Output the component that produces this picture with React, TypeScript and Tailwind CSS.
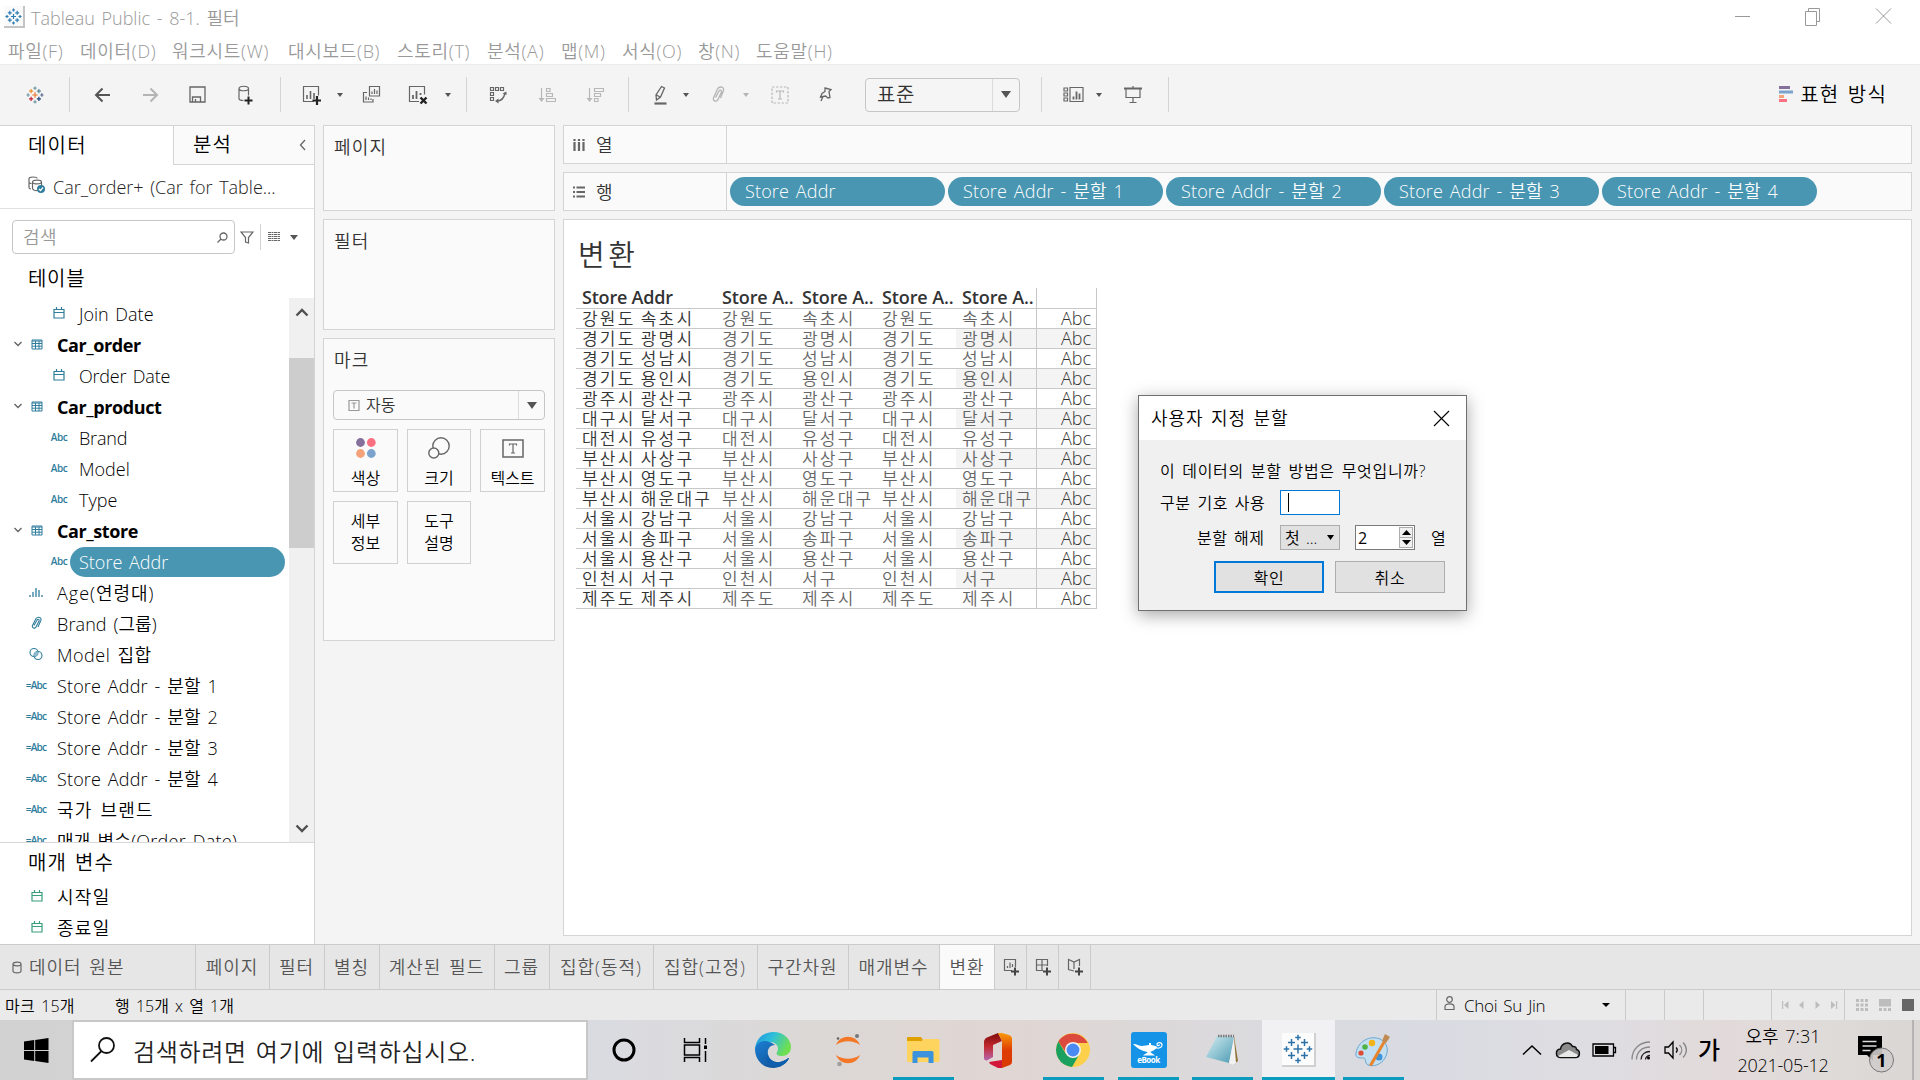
import type { ReactNode } from "react";

const addresses: [string, string][] = [
  ["강원도", "속초시"], ["경기도", "광명시"], ["경기도", "성남시"], ["경기도", "용인시"], ["광주시", "광산구"],
  ["대구시", "달서구"], ["대전시", "유성구"], ["부산시", "사상구"], ["부산시", "영도구"], ["부산시", "해운대구"],
  ["서울시", "강남구"], ["서울시", "송파구"], ["서울시", "용산구"], ["인천시", "서구"], ["제주도", "제주시"],
];

const plusArms: [number, number, number, number][] = [
  [12, 12, 3.6, 0], [12, 2.8, 2.2, 1], [12, 21.2, 2.2, 1], [2.8, 12, 2.2, 2], [21.2, 12, 2.2, 3],
  [6.8, 6.8, 2.8, 4], [17.2, 6.8, 2.8, 5], [6.8, 17.2, 2.8, 6], [17.2, 17.2, 2.8, 7],
];

function TableauMark({ size, colors, stroke = 1.5 }: { size: number; colors: string[]; stroke?: number }) {
  return (
    <svg width={size} height={size} viewBox="0 0 24 24" fill="none" strokeWidth={stroke}>
      {plusArms.map(([x, y, r, c], i) => (
        <path key={i} d={`M${x - r} ${y}H${x + r}M${x} ${y - r}V${y + r}`} stroke={colors[c % colors.length]} />
      ))}
    </svg>
  );
}

function Svg({ w, h, color = "#666", sw = 1.2, className = "", children }: { w: number; h: number; color?: string; sw?: number; className?: string; children: ReactNode }) {
  return (
    <svg width={w} height={h} viewBox={`0 0 ${w} ${h}`} fill="none" stroke={color} strokeWidth={sw} className={`shrink-0 ${className}`}>
      {children}
    </svg>
  );
}

function Caret({ w = 6, h = 4, color = "#555", className = "" }: { w?: number; h?: number; color?: string; className?: string }) {
  return (
    <svg width={w} height={h} viewBox="0 0 10 6" preserveAspectRatio="none" className={`shrink-0 ${className}`}>
      <path d="M0 0H10L5 6Z" fill={color} />
    </svg>
  );
}

const Divider = ({ className }: { className: string }) => <div className={`h-[35px] w-px shrink-0 bg-[#d4d4d4] ${className}`} />;

function TitleBar() {
  return (
    <div className="flex h-[34px] items-center bg-white">
      <div className="ml-1 flex h-[22px] w-[21px] items-center justify-center border-r-2 border-b-2 border-[#c4c4c4] bg-[#fafafa]">
        <TableauMark size={17} colors={["#2f7db5"]} stroke={1.7} />
      </div>
      <span className="mt-[2px] ml-[6px] text-[18px] text-[#999]">Tableau Public - 8-1. 필터</span>
      <Svg w={180} h={24} color="#999" sw={1} className="mr-[22px] mb-[2px] ml-auto">
        <path d="M17 12.500H32" />
        <path d="M87.500 7.500h11v14h-11zM90.500 7.500v-3h11v13h-3" />
        <path d="M158 4.500l15 15M173 4.500l-15 15" />
      </Svg>
    </div>
  );
}

const menus: [string, string][] = [
  ["파일(F)", "w-[72px]"], ["데이터(D)", "w-[92px]"], ["워크시트(W)", "w-[116px]"], ["대시보드(B)", "w-[109px]"], ["스토리(T)", "w-[90px]"],
  ["분석(A)", "w-[74px]"], ["맵(M)", "w-[61px]"], ["서식(O)", "w-[76px]"], ["창(N)", "w-[58px]"], ["도움말(H)", "w-[90px]"],
];

function MenuBar() {
  return (
    <div className="flex h-[30px] items-center bg-white pt-[3px] pl-2">
      {menus.map(([m, w]) => (
        <span key={m} className={`shrink-0 text-[18px] tracking-[0.700px] text-[#999] ${w}`}>{m}</span>
      ))}
    </div>
  );
}

function Toolbar() {
  return (
    <div className="flex h-[61px] items-center border-t border-[#ececec] bg-[#f4f4f4] pb-px">
      <div className="ml-[26px]">
        <TableauMark size={18} stroke={1.6} colors={["#e8762c", "#7099a5", "#7099a5", "#5b6591", "#eb912c", "#59879b", "#c72037", "#1f457e"]} />
      </div>
      <Divider className="ml-[25px]" />
      <Svg w={17} h={16} color="#555" sw={2} className="ml-[24px]"><path d="M16 8H2M8.500 1.500L2 8l6.500 6.500" /></Svg>
      <Svg w={17} h={16} color="#b4b4b4" sw={2} className="ml-[31px]"><path d="M1 8H15M8.500 1.500L15 8l-6.500 6.500" /></Svg>
      <Svg w={17} h={17} sw={1.300} className="ml-[30px]"><path d="M1 1h15v15h-15zM3.500 16v-5h8v5M6.500 16v-3" /></Svg>
      <Svg w={16} h={20} sw={1.200} className="ml-[32px]">
        <path d="M1 3.500v10c0 1.500 2 2 4.500 2M10.500 3.500v7M1 3.500c0-3 9.500-3 9.500 0s-9.500 3-9.500 0" />
        <path d="M10.500 11.500v8M6.500 15.500h8" stroke="#222" strokeWidth={2} />
      </Svg>
      <Divider className="ml-[26px]" />
      <Svg w={19} h={20} className="ml-[21px]">
        <path d="M12 16.500H1.500v-15h15v9" /><path d="M5 14v-4M8.500 14V6M12 14V8" strokeWidth={1.600} />
        <path d="M15 11v9M10.500 15.500h9" stroke="#222" strokeWidth={2.200} />
      </Svg>
      <Caret className="ml-[16px]" />
      <Svg w={19} h={19} className="ml-[19px]">
        <path d="M7.500 1.500h10v9.500h-10zM10 9V6.500M12.500 9V4M15 9V5.500" /><path d="M5 7.500H1.500v9.500h9.500v-3M4 15v-3.500M6.500 15v-2.500M9 15v-1.500" />
      </Svg>
      <Svg w={20} h={20} className="ml-[27px]">
        <path d="M11 16.500H1.500v-15h15v8" /><path d="M5 14v-4M8.500 14V6M12.500 10V8" strokeWidth={1.800} />
        <path d="M12.500 12.500l6 6M18.500 12.500l-6 6" stroke="#222" strokeWidth={2.400} />
      </Svg>
      <Caret className="ml-[17px]" />
      <Divider className="ml-[15px]" />
      <Svg w={20} h={19} className="ml-[22px]">
        <path d="M1.500 2.500h3v3h-3zM6.500 2.500h3v3h-3zM11.500 2.500h3v3h-3zM1.500 7.500h3v3h-3zM1.500 12.500h3v3h-3z" />
        <path d="M8 16c5 0 7-3 8-8" strokeWidth={1.400} /><path d="M17.500 6.500v3.500l-4-1.500zM6 16l3.500-2.500v5z" fill="#666" stroke="none" />
      </Svg>
      <Svg w={18} h={17} color="#b8b8b8" className="ml-[29px]"><path d="M3.500 2v11M8.500 2.500h3.500v3h-3.500zM8.500 7.500h6v3h-6zM8.500 12.500h9v3h-9z" /><path d="M.5 12h6l-3 4z" fill="#b8b8b8" stroke="none" /></Svg>
      <Svg w={18} h={17} color="#b8b8b8" className="ml-[30px]"><path d="M3.500 2v11M8.500 2.500h9v3h-9zM8.500 7.500h6v3h-6zM8.500 12.500h3.500v3h-3.500z" /><path d="M.5 12h6l-3 4z" fill="#b8b8b8" stroke="none" /></Svg>
      <Divider className="ml-[24px]" />
      <Svg w={15} h={20} sw={1.300} className="ml-[24px]">
        <path d="M8.500 1.500l3 1.500-4 9-4 3-.5-5zM3.500 10l3.500 2" /><path d="M1.500 18.500h12" strokeWidth={2.200} />
      </Svg>
      <Caret className="ml-[15px]" />
      <Svg w={15} h={20} color="#b4b4b4" sw={1.300} className="ml-[22px]">
        <path d="M4.500 12.500l3.500-6.500c1-1.500 3-.5 2.500 1L7 14.500c-1 2.500-5.500 2-4.500-1.500L6.500 4c2-3.500 7-2 6 1.500L9.500 13" />
      </Svg>
      <Caret className="ml-[17px]" color="#b4b4b4" />
      <Svg w={18} h={18} color="#b8b8b8" className="ml-[22px]">
        <path d="M1 1h16v16H1z" strokeDasharray="2.500 1.500" /><path d="M5.500 6.500V5h7v1.500M9 5v8M7 13h4" />
      </Svg>
      <Svg w={16} h={19} sw={1.300} className="ml-[29px]">
        <path d="M7 3l6 1.500-2 2 1 6-2 .5-2.500-2L2.500 12 4 8.500l3-2zM5 11.500L3 16" />
      </Svg>
      <div className="ml-[31px] flex h-[34px] w-[155px] items-center rounded-sm border border-[#c6c6c6] bg-[#f5f5f5]">
        <span className="flex-1 pl-[11px] text-[20px] tracking-[0.500px] text-[#333]">표준</span>
        <div className="flex h-full w-[27px] items-center justify-center border-l border-[#dcdcdc]"><Caret w={10} h={7} /></div>
      </div>
      <Divider className="ml-[21px]" />
      <Svg w={21} h={17} className="ml-[21px]">
        <path d="M1 2h3.500v3H1zM1 7h3.500v3H1zM1 12h3.500v3H1zM7 1.500h13v14H7z" /><path d="M10.500 13.500v-3M13.500 13.500v-8M16.500 13.500v-6" strokeWidth={1.800} />
      </Svg>
      <Caret className="ml-[12px]" />
      <Svg w={18} h={18} className="ml-[22px]">
        <path d="M0 2.500h18" strokeWidth={2} /><path d="M2 3v8.500h14V3M9 11.500V16M9 0v2M5.500 16.500h7" />
      </Svg>
      <Divider className="ml-[26px]" />
      <svg width="14" height="17" viewBox="0 0 14 17" className="ml-auto">
        <path d="M0 0h11v3H0z" fill="#85709b" /><path d="M0 4.500h14v3H0z" fill="#7ba3cd" />
        <path d="M0 9h5v3H0z" fill="#f4a27a" /><path d="M0 13h8v3H0z" fill="#fa7080" />
      </svg>
      <span className="mr-[33px] ml-[7px] text-[20px] tracking-[1.200px] text-black">표현 방식</span>
    </div>
  );
}

const Cal = ({ color = "#2f7d9c" }: { color?: string }) => (
  <Svg w={12} h={12} color={color}><path d="M1 2.500h10v8.500h-10zM1 5.500h10M3.500 0v3M8.500 0v3" /></Svg>
);
const Sheet = () => (
  <Svg w={12} h={11} color="#2f7d9c" sw={1}><path d="M1 1h10v9h-10zM1 2h10M1 4.500h10M1 7.200h10M4.500 2v8M8 2v8" /></Svg>
);
const Abc = () => <span className="text-[10px] font-semibold tracking-[-0.400px] text-[#2f7d9c]">Abc</span>;
const CalcAbc = () => <span className="text-[10px] font-semibold tracking-[-0.700px] text-[#2f7d9c]">=Abc</span>;

type Row = { label: string; kind: "sub" | "table" | "field"; icon: ReactNode; selected?: boolean; tracking?: string };
const rows: Row[] = [
  { label: "Join Date", kind: "sub", icon: <Cal /> },
  { label: "Car_order", kind: "table", icon: <Sheet /> },
  { label: "Order Date", kind: "sub", icon: <Cal />, tracking: "tracking-[-0.200px]" },
  { label: "Car_product", kind: "table", icon: <Sheet /> },
  { label: "Brand", kind: "sub", icon: <Abc />, tracking: "tracking-[-0.200px]" },
  { label: "Model", kind: "sub", icon: <Abc /> },
  { label: "Type", kind: "sub", icon: <Abc /> },
  { label: "Car_store", kind: "table", icon: <Sheet /> },
  { label: "Store Addr", kind: "sub", icon: <Abc />, selected: true },
  { label: "Age(연령대)", kind: "field", tracking: "tracking-[1px]", icon: <Svg w={14} h={10} color="#2f7d9c" sw={1.300}><path d="M1 10V8M4 10V5M7 10V1M10 10V3M13 10V8" /></Svg> },
  { label: "Brand (그룹)", kind: "field", tracking: "tracking-[0.100px]", icon: <Svg w={12} h={14} color="#2f7d9c" sw={1.100}><path d="M4 9.500l3-5.500c1-1.200 2.500-.2 2 1L6 11c-1 2-4.500 1-3.500-1.500l3.500-7c2-2.500 6-1 4.800 2L8 11" /></Svg> },
  { label: "Model 집합", kind: "field", tracking: "tracking-[0.500px]", icon: <Svg w={14} h={14} color="#2f7d9c" sw={1.100}><circle cx="5" cy="5.500" r="4" /><circle cx="9" cy="8.500" r="4" /><path d="M5 8.500a4 4 0 0 1 4-4v1a4 4 0 0 1-4 4z" fill="#8fbccc" stroke="none" /></Svg> },
  { label: "Store Addr - 분할 1", kind: "field", icon: <CalcAbc />, tracking: "tracking-[0.150px]" },
  { label: "Store Addr - 분할 2", kind: "field", icon: <CalcAbc />, tracking: "tracking-[0.150px]" },
  { label: "Store Addr - 분할 3", kind: "field", icon: <CalcAbc />, tracking: "tracking-[0.150px]" },
  { label: "Store Addr - 분할 4", kind: "field", icon: <CalcAbc />, tracking: "tracking-[0.150px]" },
  { label: "국가 브랜드", kind: "field", icon: <CalcAbc />, tracking: "tracking-[1.200px]" },
  { label: "매개 변수(Order Date)", kind: "field", icon: <CalcAbc />, tracking: "tracking-[0.250px]" },
];

function TreeRow({ label, kind, icon, selected, tracking = "tracking-normal" }: Row) {
  return (
    <div className="flex h-[31px] shrink-0 items-center text-[18px] text-black">
      <div className={`flex shrink-0 justify-end ${kind === "sub" ? "w-[30px]" : "w-[24px]"}`}>
        {kind === "table" && <Svg w={10} h={6} color="#666" sw={1.400} className="mr-[1px] -mt-px"><path d="M1.500 1l3.500 3.500L8.500 1" /></Svg>}
      </div>
      <div className={`flex shrink-0 items-center justify-center pb-[1px] ${kind === "sub" ? "ml-[17px] w-[24px]" : "w-[26px]"} ${kind === "field" ? "-ml-px" : ""}`}>{icon}</div>
      {selected ? (
        <div className="-ml-px flex h-[30px] w-[215px] items-center rounded-full bg-[#4996b2] pt-px pl-[9px] text-white">{label}</div>
      ) : (
        <span className={`pt-px whitespace-nowrap ${kind === "sub" ? "ml-[8px]" : kind === "table" ? "ml-[7px] font-bold" : "ml-[8px]"} ${kind === "table" ? "tracking-[-0.400px]" : tracking}`}>{label}</span>
      )}
    </div>
  );
}

function DataPane() {
  return (
    <div className="flex h-[819px] w-[315px] shrink-0 flex-col border-t border-r border-[#d4d4d4] bg-white">
      <div className="flex h-[39px] shrink-0 text-[20px] tracking-[1.200px] text-black">
        <div className="flex w-[173px] items-center pl-[28px]">데이터</div>
        <div className="flex flex-1 items-center justify-between border-b border-l border-[#d4d4d4] bg-[#fafafa] pr-[8px] pl-[19px]">
          <span>분석</span>
          <Svg w={7} h={12} sw={1.300}><path d="M6 1L1.500 6 6 11" /></Svg>
        </div>
      </div>
      <div className="flex h-[44px] shrink-0 items-center border-b border-[#e0e0e0] pl-[28px]">
        <Svg w={18} h={18} className="mb-[3px]">
          <path d="M1 2.500v9c0 1 1 1.500 2 1.500M1 2.500c0-2 8-2 8 0M4.500 6v6c0 3 4 2.500 5 2.500M4.500 6c0-2.500 9-2.500 9 0s-9 2.500-9 0M13.500 6v3M1 6c0 1 1 1.500 2.500 1.500" />
          <circle cx="13" cy="13" r="4" fill="#2f7d9c" stroke="none" /><path d="M11 13l1.500 1.500 2.500-3" stroke="#fff" />
        </Svg>
        <span className="ml-[7px] text-[18px] text-[#222]">Car_order+ (Car for Table...</span>
      </div>
      <div className="mt-[11px] flex h-[34px] shrink-0 items-center pl-3">
        <div className="flex h-[34px] w-[223px] items-center justify-between rounded-sm border border-[#c6c6c6] pr-[6px] pl-[10px]">
          <span className="text-[18px] tracking-[0.500px] text-[#999]">검색</span>
          <Svg w={11} h={11} sw={1.300}><circle cx="6.500" cy="4.500" r="3.500" /><path d="M4 7L.5 10.500" /></Svg>
        </div>
        <Svg w={14} h={13} className="ml-[5px]"><path d="M1 1h12L8.500 6.500V12L5.500 11V6.500z" /></Svg>
        <div className="ml-[6px] h-[26px] w-px bg-[#d4d4d4]" />
        <Svg w={12} h={10} sw={1} className="ml-[7px]"><path d="M0 .5H12M0 2.500H12M0 4.500H12M0 6.500H12M0 8.500H12" strokeDasharray="3 .5 2 .5 3 .5 2.500 9" /></Svg>
        <Caret w={8} h={5} className="ml-[10px]" />
      </div>
      <div className="flex h-[44px] shrink-0 items-center pt-[5px] pl-[28px] text-[20px] tracking-[0.700px] text-black">테이블</div>
      <div className="flex h-[544px] shrink-0">
        <div className="flex w-[289px] flex-col overflow-hidden">
          {rows.map((r) => <TreeRow key={r.label} {...r} />)}
        </div>
        <div className="flex w-[25px] flex-col items-center bg-[#f0f0f0]">
          <Svg w={14} h={10} color="#505050" sw={2.400} className="mt-[9px]"><path d="M1.500 8.500L7 3l5.500 5.500" /></Svg>
          <div className="mt-[41px] h-[190px] w-full bg-[#cdcdcd]" />
          <Svg w={14} h={10} color="#505050" sw={2.400} className="mt-auto mb-[8px]"><path d="M1.500 1.500L7 7l5.500-5.500" /></Svg>
        </div>
      </div>
      <div className="flex h-[39px] shrink-0 items-center border-t border-[#d8d8d8] pt-[2px] pl-[28px] text-[20px] tracking-[1px] text-black">매개 변수</div>
      {["시작일", "종료일"].map((p) => (
        <div key={p} className="flex h-[31px] shrink-0 items-center pt-px pl-[31px] text-[18px] text-black">
          <div className="pb-[2px]"><Cal color="#3a9e7b" /></div>
          <span className="ml-[14px] tracking-[1.300px]">{p}</span>
        </div>
      ))}
    </div>
  );
}

const Card = ({ title, className, children }: { title: string; className: string; children?: ReactNode }) => (
  <div className={`w-[232px] shrink-0 border border-[#d4d4d4] bg-[#fafafa] px-[9px] ${className}`}>
    <div className="flex h-[42px] items-center pl-px text-[18px] tracking-[1.200px] text-[#333]">{title}</div>
    {children}
  </div>
);

function MarkButton({ icon, children }: { icon?: ReactNode; children: ReactNode }) {
  return (
    <div className="flex h-[63px] flex-col items-center justify-center border border-[#d0d0d0] text-center text-[16px] leading-[22px] text-black">
      {icon && <div className="flex h-[30px] items-center pt-px">{icon}</div>}
      <span className={icon ? "pt-[4px]" : "pb-px"}>{children}</span>
    </div>
  );
}

function Cards() {
  return (
    <div className="ml-2 flex flex-col gap-2">
      <Card title="페이지" className="h-[86px]" />
      <Card title="필터" className="h-[111px]" />
      <Card title="마크" className="h-[303px]">
        <div className="mt-[9px] flex h-[30px] items-center rounded-sm border border-[#c6c6c6]">
          <Svg w={12} h={11} color="#999" className="ml-[14px]"><path d="M1 .5h10v10H1zM3.500 3h5M6 3v5.500" /></Svg>
          <span className="ml-[6px] flex-1 text-[16px] text-[#333]">자동</span>
          <div className="flex h-full w-[26px] items-center justify-center border-l border-[#dcdcdc]"><Caret w={10} h={7} /></div>
        </div>
        <div className="mt-[9px] grid grid-cols-[65px_64px_65px] gap-x-[9px] gap-y-[9px]">
          <MarkButton icon={<svg width="20" height="20" viewBox="0 0 20 20"><circle cx="4.500" cy="4.500" r="4.400" fill="#85709b" /><circle cx="15.300" cy="4.500" r="4.400" fill="#fa7080" /><circle cx="4.500" cy="15.500" r="4.400" fill="#f4a27a" /><circle cx="15.300" cy="15.500" r="4.400" fill="#7ba3cd" /></svg>}>색상</MarkButton>
          <MarkButton icon={<Svg w={22} h={22} sw={1.400}><circle cx="13" cy="9" r="8.200" /><circle cx="5.800" cy="16" r="5" fill="#fafafa" /></Svg>}>크기</MarkButton>
          <MarkButton icon={<Svg w={22} h={19} sw={1.500}><path d="M1 1h20v17H1z" /><path d="M7.500 6.500V5h7v1.500M11 5v9M9 14h4" strokeWidth={1.200} /></Svg>}>텍스트</MarkButton>
          <MarkButton>세부<br />정보</MarkButton>
          <MarkButton>도구<br />설명</MarkButton>
        </div>
      </Card>
    </div>
  );
}

function Shelf({ name, icon, pills }: { name: string; icon: ReactNode; pills: string[] }) {
  return (
    <div className="flex h-[39px] shrink-0 border border-[#d4d4d4] bg-[#fafafa]">
      <div className="flex w-[163px] items-center border-r border-[#d4d4d4] pl-[9px] text-[18px] text-[#333]">
        {icon}
        <span className="ml-[11px]">{name}</span>
      </div>
      <div className="flex items-center gap-[3px] pl-[3px]">
        {pills.map((p) => (
          <div key={p} className="flex h-[29px] w-[215px] items-center rounded-full bg-[#4996b2] pb-[2px] pl-[15px] text-[18px] tracking-[0.150px] text-white">{p}</div>
        ))}
      </div>
    </div>
  );
}

function View() {
  return (
    <div className="flex h-[717px] flex-col border border-[#d4d4d4] bg-white pl-3">
      <div className="flex h-[68px] items-center pl-[2px] text-[29px] tracking-[3.500px] text-[#333]">변환</div>
      <div className="grid w-[521px] grid-cols-[140px_80px_80px_80px_80px_61px] text-[17px] [word-spacing:-1.400px]">
        <div className="h-[21px] border-b border-[#c8c8c8] pl-[6px] text-[18px] leading-[18px] font-semibold tracking-[-0.200px] [word-spacing:0px] text-[#333]">Store Addr</div>
        {[1, 2, 3, 4].map((n) => (
          <div key={n} className="h-[21px] border-b border-[#c8c8c8] pl-[6px] text-[18px] leading-[18px] font-semibold tracking-[-0.100px] [word-spacing:0px] whitespace-nowrap text-[#333]">Store A..</div>
        ))}
        <div className="border-x border-b border-[#c8c8c8]" />
        {addresses.map(([a, b], i) => {
          const stripe = i % 2 ? "bg-[#f4f4f4]" : "";
          return (
            <div key={b} className="contents leading-[19px] tracking-[2.200px] whitespace-nowrap text-[#666]">
              <div className="h-5 border-b border-[#c8c8c8] pl-[6px] text-[#333]">{a} {b}</div>
              <div className="h-5 border-b border-[#c8c8c8] pl-[6px]">{a}</div>
              <div className="h-5 border-b border-[#c8c8c8] pl-[6px]">{b}</div>
              <div className="h-5 border-b border-[#c8c8c8] pl-[6px]">{a}</div>
              <div className={`h-5 border-b border-[#c8c8c8] pl-[6px] ${stripe}`}>{b}</div>
              <div className={`h-5 border-x border-b border-[#c8c8c8] pr-[5px] text-right text-[18px] tracking-normal text-[#333] ${stripe}`}>Abc</div>
            </div>
          );
        })}
      </div>
    </div>
  );
}

function SplitDialog() {
  return (
    <div className="absolute top-[395px] left-[1138px] flex h-[216px] w-[329px] flex-col border border-[#707070] bg-[#f0f0f0] text-[16px] tracking-[0.700px] text-black shadow-[0_4px_16px_rgba(0,0,0,0.35)]">
      <div className="flex h-[44px] items-center justify-between bg-white pr-[16px] pl-[12px]">
        <span className="text-[18px] tracking-[0.900px]">사용자 지정 분할</span>
        <Svg w={17} h={17} color="#000" sw={1.100}><path d="M1 1l15 15M16 1L1 16" /></Svg>
      </div>
      <div className="mt-[18px] h-[26px] pl-[21px] leading-[26px] whitespace-nowrap">이 데이터의 분할 방법은 무엇입니까?</div>
      <div className="mt-[6px] flex h-[25px] items-center pl-[21px]">
        <span className="w-[120px] tracking-[0.600px]">구분 기호 사용</span>
        <div className="flex h-[25px] w-[60px] items-center border border-[#0078d7] bg-white pl-[7px]"><div className="h-[19px] w-px bg-black" /></div>
      </div>
      <div className="mt-[10px] flex h-[25px] items-center pl-[58px]">
        <span className="w-[83px] tracking-[0.500px]">분할 해제</span>
        <div className="flex h-[25px] w-[60px] items-center justify-between border border-[#adadad] bg-[#e1e1e1] pr-[5px] pl-1 tracking-normal"><span>첫 ...</span><Caret w={7} h={5} color="#000" /></div>
        <div className="ml-[15px] flex h-[25px] w-[60px] items-center justify-between border border-[#7a7a7a] bg-white pr-px pl-[2px]">
          <span className="font-normal">2</span>
          <div className="flex flex-col">
            <div className="flex h-[11px] w-[14px] items-center justify-center border border-[#adadad] bg-[#f0f0f0]"><Caret w={9} h={5} color="#000" className="rotate-180" /></div>
            <div className="-mt-px flex h-[11px] w-[14px] items-center justify-center border border-[#adadad] bg-[#f0f0f0]"><Caret w={9} h={5} color="#000" /></div>
          </div>
        </div>
        <span className="ml-[16px]">열</span>
      </div>
      <div className="mt-[11px] flex h-[32px] gap-[11px] pl-[75px]">
        <div className="flex w-[110px] items-center justify-center border-2 border-[#0078d7] bg-[#e1e1e1] pt-px">확인</div>
        <div className="flex w-[110px] items-center justify-center border border-[#adadad] bg-[#e1e1e1] pt-px">취소</div>
      </div>
    </div>
  );
}

const sheetTabs: [string, string][] = [
  ["페이지", "w-[74px]"], ["필터", "w-[55px]"], ["별칭", "w-[55px]"], ["계산된 필드", "w-[115px]"], ["그룹", "w-[55px]"],
  ["집합(동적)", "w-[104px]"], ["집합(고정)", "w-[104px]"], ["구간차원", "w-[91px]"], ["매개변수", "w-[91px]"],
];

function SheetTabs() {
  const add = <path d="M12 9.500v8M8 13.500h8" stroke="#444" strokeWidth={2} />;
  return (
    <div className="flex h-[46px] border-y border-[#cbcbcb] bg-[#e6e6e6] text-[18px] tracking-[1px] text-[#555]">
      <div className="flex w-[196px] items-center border-r border-[#cbcbcb] pl-[12px]">
        <Svg w={10} h={13}><path d="M1 3v7c0 2.500 8 2.500 8 0V3M1 3c0-2.500 8-2.500 8 0s-8 2.500-8 0" /></Svg>
        <span className="ml-[7px]">데이터 원본</span>
      </div>
      {sheetTabs.map(([t, w]) => (
        <div key={t} className={`flex shrink-0 items-center justify-center border-r border-[#cbcbcb] pr-px whitespace-nowrap ${w}`}>{t}</div>
      ))}
      <div className="flex w-[55px] items-center justify-center border-r border-[#cbcbcb] bg-[#fafafa]">변환</div>
      <div className="flex w-[32px] items-center justify-center border-r border-[#cbcbcb] pl-[2px]"><Svg w={17} h={18}><path d="M9 12.500H1.500v-11h11V9M4.500 10V8M7 10V4.500M9.500 9V6" />{add}</Svg></div>
      <div className="flex w-[32px] items-center justify-center border-r border-[#cbcbcb] pl-[2px]"><Svg w={17} h={18}><path d="M8 12.500H1.500v-11h11V8M1.500 7h11M7 1.500v11" />{add}</Svg></div>
      <div className="flex w-[32px] items-center justify-center border-r border-[#cbcbcb] pl-[2px]"><Svg w={17} h={18}><path d="M7 13l-5.500-1.500V1.500L7 4l5.500-2.500V8M7 4v7" />{add}</Svg></div>
    </div>
  );
}

function StatusBar() {
  return (
    <div className="flex h-[30px] items-center bg-[#eaeaea] text-[16px] text-black">
      <span className="w-[110px] pt-[2px] pl-[5px] tracking-[0.200px]">마크 15개</span>
      <span className="pt-[2px] pl-[5px]">행 15개 x 열 1개</span>
      <div className="ml-auto flex h-full w-[189px] items-center border-l border-[#cbcbcb] pr-[15px] pl-[7px]">
        <Svg w={11} h={15} className="-mt-1"><circle cx="5.500" cy="3.500" r="2.800" /><path d="M1 13.500v-3c0-3.500 9-3.500 9 0v3z" /></Svg>
        <span className="ml-[9px] flex-1 text-[17px] tracking-[-0.300px]">Choi Su Jin</span>
        <Caret w={8} h={4} color="#000" />
      </div>
      <div className="h-full w-[39px] border-l border-[#cbcbcb]" />
      <div className="h-full w-[39px] border-l border-[#cbcbcb]" />
      <div className="h-full w-[68px] border-l border-[#cbcbcb]" />
      <div className="flex h-full w-[73px] items-center border-l border-[#cbcbcb] pb-px pl-[10px]">
        <svg width="56" height="8" viewBox="0 0 56 8" fill="#bdbdbd"><path d="M0 0h1.200v8H0zM6.500 0v8L2 4zM21.500 0v8L17 4zM33.500 0v8L38 4zM49 0v8l4.500-4zM54 0h1.200v8H54z" /></svg>
      </div>
      <div className="flex h-full w-[76px] items-center border-l border-[#cbcbcb] pb-px pl-[11px]">
        <svg width="58" height="12" viewBox="0 0 58 12" fill="#bdbdbd">
          <path d="M0 0h3v3H0zM4.500 0h3v3h-3zM9 0h3v3H9zM0 4.500h3v3H0zM4.500 4.500h3v3h-3zM9 4.500h3v3H9zM0 9h3v3H0zM4.500 9h3v3h-3zM9 9h3v3H9zM23 0h12v7.500H23zM23 9h3v3h-3zM27.500 9h3v3h-3zM32 9h3v3h-3z" />
          <path d="M46 0h12v12H46z" fill="#666" />
        </svg>
      </div>
    </div>
  );
}

function TaskIcon({ w, running, active, children }: { w: string; running?: boolean; active?: boolean; children: ReactNode }) {
  return (
    <div className={`flex h-[60px] shrink-0 flex-col items-center ${w} ${active ? "bg-[#f1f1f3]" : ""}`}>
      <div className="flex h-[57px] items-center pt-[3px]">{children}</div>
      {running && <div className={`h-[3px] bg-[#0a9bbf] ${active ? "w-full" : "w-[61px]"}`} />}
    </div>
  );
}

function TaskBar() {
  return (
    <div className="flex h-[60px] bg-[linear-gradient(90deg,#d2d2d2_0px,#d3d3d3_300px,#dadbe1_600px,#dbd8d6_800px,#e0d6d3_1000px,#dbd9db_1200px,#d9dbe2_1400px,#dedde2_1600px,#e2dada_1720px,#dfdbd9_1820px,#d9d6d4_1920px)]">
      <div className="flex w-[72px] items-center justify-center">
        <svg width="25" height="25" viewBox="0 0 25 25"><path d="M0 3.500L10.200 2v10H0zM11.200 1.900L24.500 0v12H11.200zM0 13h10.200v10L0 21.500zM11.200 13H24.500v12l-13.300-1.900z" /></svg>
      </div>
      <div className="flex h-[60px] w-[516px] items-center border-2 border-[#c8c8c8] bg-white pl-[16px]">
        <Svg w={26} h={26} color="#111" sw={1.800}><circle cx="16.500" cy="8.500" r="7.500" /><path d="M11.500 14L1 24.500" /></Svg>
        <span className="ml-[17px] pt-[3px] text-[24px] tracking-[0.700px] text-[#222]">검색하려면 여기에 입력하십시오.</span>
      </div>
      <TaskIcon w="w-[72px]"><Svg w={26} h={26} color="#000" sw={3}><circle cx="13" cy="13" r="10" /></Svg></TaskIcon>
      <TaskIcon w="w-[72px]">
        <Svg w={26} h={26} color="#000" sw={1.500}><path d="M1.500 1v4.500h15V1M1.500 25v-4.500h15V25M1.500 8h15v10h-15zM22.500 1v6M22.500 14v11" /><path d="M21 8.500h3v3.500h-3z" fill="#000" stroke="none" /></Svg>
      </TaskIcon>
      <TaskIcon w="w-[82px]">
        <svg width="36" height="36" viewBox="0 0 36 36">
          <defs>
            <linearGradient id="edgeTop" x1="0" y1="0" x2="1" y2="0.400"><stop offset="0" stopColor="#1f93dd" /><stop offset=".5" stopColor="#2fc0da" /><stop offset="1" stopColor="#6fdf52" /></linearGradient>
            <linearGradient id="edgeLow" x1="0" y1="0" x2="1" y2="1"><stop offset="0" stopColor="#1b7fd4" /><stop offset="1" stopColor="#114a8b" /></linearGradient>
          </defs>
          <path d="M0 17C1 6 9 0 18.500 0 29 0 36 7.500 36 15c0 6-4.500 9-9 9-4 0-5.500-1.500-5.500-2.500s1.500-1.800 1.500-5-3-6.500-8-6.500S3 13 0 17z" fill="url(#edgeTop)" />
          <path d="M0 17C2 10 8 8 13 9.500 17 10.500 20 13 20 13c-5 0-8 4-7 9.500C14 28 20 31 25 30s8.500-4.500 9-4c.5.500-5 10-15.500 10S0 28 0 17z" fill="url(#edgeLow)" />
          <path d="M13 22.500C14 28 20 31 25 30s8.500-4.500 9-4c.5.500-4 7-10 9C15 35 9 29 13 22.500z" fill="#0d5fae" />
        </svg>
      </TaskIcon>
      <TaskIcon w="w-[67px]">
        <svg width="26" height="34" viewBox="0 0 26 34"><path d="M1 12C5 1 21 1 25 12 18 7 8 7 1 12zM1 22c4 11 20 11 24 0-7 5-17 5-24 0z" fill="#f37726" /><circle cx="22" cy="3" r="2" fill="#767677" /><circle cx="3" cy="5.500" r="1.300" fill="#616262" /><circle cx="4.500" cy="31" r="2.300" fill="#9e9e9e" /></svg>
      </TaskIcon>
      <TaskIcon w="w-[84px]" running>
        <svg width="33" height="28" viewBox="0 0 33 28"><path d="M0 2q0-1 1-1h13l1.500 2v3H0z" fill="#dfa000" /><path d="M0 5h15l2-2h14q1.500 0 1.500 1.500V25q0 1-1 1H1q-1 0-1-1z" fill="#ffd45e" /><path d="M5.500 27V16.500q0-1.500 1.500-1.500h18q1.500 0 1.500 1.500V27h-5v-5.500h-11V27z" fill="#3a93dc" /></svg>
      </TaskIcon>
      <TaskIcon w="w-[66px]">
        <svg width="28" height="35" viewBox="0 0 28 35">
          <defs>
            <linearGradient id="officeLeft" x1="0" y1="0" x2="0" y2="1"><stop offset="0" stopColor="#7d0a0a" /><stop offset=".5" stopColor="#c42a30" /><stop offset="1" stopColor="#b566b0" /></linearGradient>
            <linearGradient id="officeRight" x1="0" y1="0" x2="0" y2="1"><stop offset="0" stopColor="#f99a08" /><stop offset=".5" stopColor="#df3c05" /><stop offset="1" stopColor="#d83b01" /></linearGradient>
          </defs>
          <path d="M0 9q0-3 3-4.500L14 0l4 8-9 4v12l-6 3.500Q0 28 0 25z" fill="url(#officeLeft)" /><path d="M14 0q2-.3 4 0l7 2q3 1 3 4v23q0 2-2 3l-8 3V8z" fill="url(#officeRight)" /><path d="M5 29l13-2v8q-2 .3-4 0L6 31z" fill="#d3173a" />
        </svg>
      </TaskIcon>
      <TaskIcon w="w-[84px]" running>
        <svg width="34" height="34" viewBox="0 0 34 34"><circle cx="17" cy="17" r="17" fill="#fcd04b" /><path d="M2.300 8.500A17 17 0 0 1 31.700 10L17 10 11 21z" fill="#dc4a3d" /><path d="M2.300 8.500A17 17 0 0 0 16 34l7-12-6 3-7-4z" fill="#1aa15f" /><circle cx="17" cy="17" r="8" fill="#f1f1f1" /><circle cx="17" cy="17" r="6.400" fill="#4a8af4" /></svg>
      </TaskIcon>
      <TaskIcon w="w-[67px]" running>
        <div className="flex h-9 w-9 flex-col items-center justify-end rounded-[3px] bg-[#1593e6] pb-[5px]">
          <svg width="34" height="14" viewBox="0 0 34 14" fill="#fff"><path d="M1 2c3-.5 6 2 9 2 2 0 5-1 7-1v-2h2v2c2 0 3 1 6 1.500C24 8 20 9 18.500 10c1 1.500 3 2 4.500 3.500H11c1.500-1.500 4-2 4.500-3.500C10 9 6 7 1 2z" /><path d="M23 5.500c4 1.500 7 0 7-2.500 0-3-5-3-5-.5 0 1.500 2.500 1.500 2.500 0" fill="none" stroke="#fff" strokeWidth="1.200" /></svg>
          <span className="text-[8px] leading-[7px] font-bold tracking-[-0.500px] text-white">eBook</span>
        </div>
      </TaskIcon>
      <TaskIcon w="w-[80px]" running>
        <svg width="34" height="32" viewBox="0 0 34 32"><defs><linearGradient id="pad" x1="0" y1="0" x2="1" y2="1"><stop offset="0" stopColor="#d5eef2" /><stop offset="1" stopColor="#4d9cb4" /></linearGradient></defs><path d="M29 2l4 25-5 4z" fill="#8f7335" /><path d="M12 2L29 3l-5 26L1 23z" fill="url(#pad)" /><path d="M24 29L29 4l2 25-3 2z" fill="#f2f2f2" /><path d="M13 2h16" stroke="#777" strokeWidth="2.500" strokeDasharray="1.500 1" /></svg>
      </TaskIcon>
      <TaskIcon w="w-[73px]" running active>
        <div className="flex h-[34px] w-[34px] items-center justify-center border-r-2 border-b-2 border-[#d0d0d0] bg-[#fcfcfc]"><TableauMark size={30} stroke={1.200} colors={["#2c72a8"]} /></div>
      </TaskIcon>
      <TaskIcon w="w-[77px]" running>
        <svg width="36" height="34" viewBox="0 0 36 34" className="mr-[3px]"><path d="M2 20C4 8 16 2 26 6c8 4 9 12 5 19-4 7-12 9-17 7-4-2-1-7-5-7s-8 0-7-5z" fill="#c2dff2" stroke="#6ca6cf" /><circle cx="18" cy="10" r="3.200" fill="#f2b31b" /><circle cx="11" cy="14" r="2.800" fill="#4fb34a" /><circle cx="7" cy="20" r="2.600" fill="#dd4b32" /><circle cx="25" cy="24" r="3.500" fill="#3f94d8" /><path d="M15 32L29 8l2.500 1.500L18 33z" fill="#e8842c" /><path d="M28 8l3-7 5 3-4 6z" fill="#c08a52" /></svg>
      </TaskIcon>
      <div className="ml-auto flex items-center">
        <Svg w={20} h={12} color="#000" sw={1.500}><path d="M1 10.500L10 2l9 8.500" /></Svg>
        <Svg w={26} h={18} color="#111" sw={1.500} className="ml-[13px]"><path d="M6 16.500c-6 0-6-8-.5-8.500 1-6 9-8.500 12-2.500 3-.5 4 1.500 4 3 4 1 4 8-1 8z" fill="#8b8b8b" /><path d="M3 15l11-6 9 5-1.500 2H5z" fill="#e8e8e8" stroke="none" /></Svg>
        <Svg w={25} h={14} color="#000" sw={1.300} className="ml-[11px]"><path d="M1 1h20.500v12H1zM21.500 4.500h2v5h-2" /><path d="M3 3h13.500v8H3z" fill="#000" stroke="none" /></Svg>
        <Svg w={20} h={19} color="#888" sw={1.300} className="ml-[14px]"><path d="M1 18.500C1 8 9 1 19 1M5.500 18.500C5.500 11 11 6 19 6" /><path d="M10 18.500c0-5 4-8 9-8M14.500 18.500c0-2 2-4 4.500-4" stroke="#222" /><circle cx="17.500" cy="17" r="1.500" fill="#000" stroke="none" /></Svg>
        <Svg w={24} h={20} color="#000" sw={1.300} className="ml-[13px]"><path d="M1 7h3.500L9 2v16l-4.500-5H1z" /><path d="M12 7.500c1.500 1.500 1.500 3.500 0 5" /><path d="M15.500 5c3 3 3 7 0 10M19 2.500c4.500 4.500 4.500 10.500 0 15" stroke="#888" /></Svg>
        <span className="ml-[10px] text-[24px] font-medium text-black">가</span>
        <div className="mt-[2px] ml-[12px] flex w-[102px] flex-col items-center text-[18px] leading-[29px] text-black">
          <span>오후 7:31</span>
          <span className="tracking-[-0.300px]">2021-05-12</span>
        </div>
        <svg width="38" height="38" viewBox="0 0 38 38" className="mt-2 ml-[23px]"><path d="M1 1h24v19h-9v6l-6-6H1z" fill="#000" /><path d="M5.500 6.500h14M5.500 11h14M5.500 15.500h8" stroke="#ddd" strokeWidth="1.300" /><circle cx="24.500" cy="25" r="12" fill="#cfcccb" fillOpacity=".9" stroke="#777" /><text x="24.500" y="31.500" textAnchor="middle" fontSize="18" fontWeight="700" fill="#000">1</text></svg>
        <div className="mr-[6px] ml-[17px] h-[60px] w-[2px] bg-[#b4b2b2]" />
      </div>
    </div>
  );
}

export default function App() {
  return (
    <div className="relative flex h-[1080px] w-[1920px] flex-col overflow-hidden bg-[#f4f4f4] font-['Open_Sans','Noto_Sans_CJK_KR',sans-serif] leading-none font-[350] [word-spacing:2px]">
      <TitleBar />
      <MenuBar />
      <Toolbar />
      <div className="flex h-[819px]">
        <DataPane />
        <Cards />
        <div className="ml-2 flex w-[1349px] flex-col gap-2">
          <Shelf name="열" pills={[]} icon={<Svg w={12} h={12} sw={2.200}><path d="M1.500 0v2M1.500 3v9M6 0v2M6 3v9M10.500 0v2M10.500 3v9" /></Svg>} />
          <Shelf name="행" pills={["Store Addr", "Store Addr - 분할 1", "Store Addr - 분할 2", "Store Addr - 분할 3", "Store Addr - 분할 4"]} icon={<Svg w={12} h={12} sw={2}><path d="M0 1.500h2M3.500 1.500H12M0 6h2M3.500 6H12M0 10.500h2M3.500 10.500H12" /></Svg>} />
          <View />
        </div>
      </div>
      <SheetTabs />
      <StatusBar />
      <TaskBar />
      <SplitDialog />
    </div>
  );
}
